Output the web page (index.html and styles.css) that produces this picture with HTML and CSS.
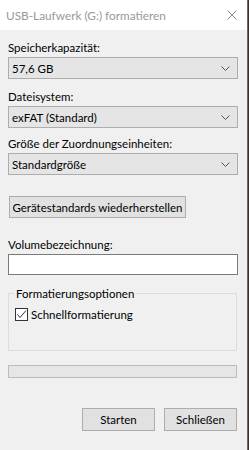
FILE: index.html
```html
<!DOCTYPE html>
<html lang="de">
<head>
<meta charset="utf-8">
<title>USB-Laufwerk (G:) formatieren</title>
<link rel="stylesheet" href="styles.css">
</head>
<body>
<div class="window">
  <div class="titlebar">
    <span class="title">USB-Laufwerk (G:) formatieren</span>
    <svg class="close" width="10" height="10" viewBox="0 0 10 10"><path d="M0.5 0.5 L9.5 9.5 M9.5 0.5 L0.5 9.5" stroke="#8a8a8a" stroke-width="1" fill="none"/></svg>
  </div>
  <div class="content">
    <div class="label l1">Speicherkapazität:</div>
    <div class="combo"><span>57,6 GB</span><svg class="chev" width="9" height="5" viewBox="0 0 9 5"><path d="M0.5 0.5 L4.5 4.5 L8.5 0.5" stroke="#555" fill="none"/></svg></div>
    <div class="label l2">Dateisystem:</div>
    <div class="combo"><span>exFAT (Standard)</span><svg class="chev" width="9" height="5" viewBox="0 0 9 5"><path d="M0.5 0.5 L4.5 4.5 L8.5 0.5" stroke="#555" fill="none"/></svg></div>
    <div class="label l3">Größe der Zuordnungseinheiten:</div>
    <div class="combo"><span>Standardgröße</span><svg class="chev" width="9" height="5" viewBox="0 0 9 5"><path d="M0.5 0.5 L4.5 4.5 L8.5 0.5" stroke="#555" fill="none"/></svg></div>
    <div class="btn restore">Gerätestandards wiederherstellen</div>
    <div class="label l4">Volumebezeichnung:</div>
    <div class="input"></div>
    <div class="group">
      <div class="legend">Formatierungsoptionen</div>
      <div class="check-row">
        <span class="checkbox"><svg width="11" height="11" viewBox="0 0 11 11"><path d="M1.5 5.5 L4 8.5 L10 1.5" stroke="#333" stroke-width="1" fill="none"/></svg></span>
        <span>Schnellformatierung</span>
      </div>
    </div>
    <div class="progress"></div>
    <div class="actions">
      <div class="btn action">Starten</div>
      <div class="btn action">Schließen</div>
    </div>
  </div>
</div>
</body>
</html>
```

FILE: styles.css
```css
*, *::before, *::after {
  box-sizing: border-box;
}
html, body {
  margin: 0;
  padding: 0;
}
body {
  width: 249px;
  height: 450px;
  background: #3b302e;
  font-family: Lato, "Noto Sans", sans-serif;
  font-size: 11.5px;
  color: #000;
  overflow: hidden;
}
.window {
  width: 248px;
  height: 450px;
  background: #f0f0f0;
  border-right: 1px solid #6e6a68;
}
.titlebar {
  height: 30px;
  background: #ffffff;
  display: flex;
  align-items: center;
  justify-content: space-between;
  padding: 0 10px 0 6px;
}
.title {
  color: #999999;
  font-size: 11.8px;
  line-height: 15px;
}
.close {
  display: block;
}
.content {
  padding: 0 9px 0 8px;
  display: flex;
  flex-direction: column;
}
.label {
  line-height: 15px;
  height: 15px;
  margin-bottom: 2px;
}
.l1 { margin-top: 10px; }
.l2 { margin-top: 10px; }
.l3 { margin-top: 8px; }
.l4 { margin-top: 19px; }
.combo {
  height: 22px;
  border: 1px solid #adadad;
  background: #e5e5e5;
  display: flex;
  align-items: center;
  justify-content: space-between;
  padding: 0 7px 0 3px;
  line-height: 15px;
}
.chev { display: block; }
.btn {
  border: 1px solid #adadad;
  background: #e1e1e1;
  display: flex;
  align-items: center;
  justify-content: center;
  line-height: 15px;
  white-space: nowrap;
}
.restore {
  align-self: flex-start;
  width: 177px;
  height: 22px;
  margin-top: 21px;
  margin-left: 1px;
}
.input {
  height: 21px;
  border: 1px solid #7a7a7a;
  background: #ffffff;
}
.group {
  margin-top: 18px;
  margin-right: 1px;
  height: 58px;
  border: 1px solid #dcdcdc;
  position: relative;
  padding: 0 0 0 6px;
}
.legend {
  position: absolute;
  top: -8px;
  left: 5px;
  background: #f0f0f0;
  padding: 0 2px;
  line-height: 15px;
}
.check-row {
  display: flex;
  align-items: center;
  margin-top: 13px;
  line-height: 15px;
}
.checkbox {
  width: 13px;
  height: 13px;
  border: 1px solid #333;
  background: #fff;
  margin-right: 3px;
  display: flex;
}
.checkbox svg { display: block; }
.progress {
  margin-top: 14px;
  margin-right: 1px;
  height: 13px;
  border: 1px solid #bcbcbc;
  background: #e6e6e6;
}
.actions {
  display: flex;
  justify-content: flex-end;
  gap: 9px;
  margin-top: 30px;
  padding-right: 1px;
}
.action {
  width: 73px;
  height: 23px;
}
```
